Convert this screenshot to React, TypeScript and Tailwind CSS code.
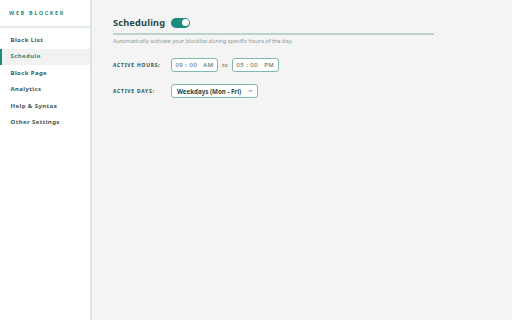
import React from 'react';

const navItems = ['Block List', 'Schedule', 'Block Page', 'Analytics', 'Help & Syntax', 'Other Settings'];

function TimeBox({ value, period }: { value: string; period: string }) {
  return (
    <div className="flex h-[14px] w-[47px] items-center justify-center gap-[6px] rounded-[3px] border border-[#7fb9b0] bg-white text-[6px] tracking-[0.5px] text-[#3a5a58]">
      <span>{value}</span>
      <span>{period}</span>
    </div>
  );
}

export default function App() {
  return (
    <div className="flex h-[320px] w-[512px] bg-[#f4f4f4] font-['Noto_Sans',sans-serif]">
      {/* sidebar */}
      <aside className="w-[92px] shrink-0 border-r-2 border-[#d9e7e4] bg-white">
        <div className="flex h-[28px] items-center border-b-2 border-[#e3ecea] pl-[9px] text-[5.5px] font-bold tracking-[1.6px] text-[#2a8a7c]">
          WEB BLOCKER
        </div>
        <nav className="pt-[4px]">
          {navItems.map(item => (
            <div
              key={item}
              className={
                item === 'Schedule'
                  ? 'flex h-[16.5px] items-center border-l-2 border-[#1a8c7b] bg-[#f2f2f2] pl-[8.5px] text-[6px] font-bold tracking-[0.4px] text-[#2a8a7c]'
                  : 'flex h-[16.5px] items-center pl-[10.5px] text-[6px] font-bold tracking-[0.4px] text-[#3d5554]'
              }
            >
              {item}
            </div>
          ))}
        </nav>
      </aside>

      {/* main */}
      <main className="flex-1 pl-[21px] pt-[16px]">
        <div className="w-[321px]">
          <div className="flex items-center gap-[6px] border-b-2 border-[#b9d3cf] pb-[3px]">
            <h1 className="text-[9.2px] font-bold tracking-[0.2px] text-[#1f4745]">Scheduling</h1>
            <div className="relative h-[10px] w-[19px] rounded-full bg-[#1a8c7b]">
              <div className="absolute right-[1.5px] top-[1.5px] h-[7px] w-[7px] rounded-full bg-white" />
            </div>
          </div>
        </div>
        <p className="mt-[2px] text-[5.6px] text-[#8a9a98]">
          Automatically activate your blocklist during specific hours of the day.
        </p>

        <div className="mt-[13px] flex items-center">
          <span className="w-[58px] text-[4.9px] font-bold tracking-[0.8px] text-[#24504d]">ACTIVE HOURS:</span>
          <TimeBox value="09 : 00" period="AM" />
          <span className="mx-[4px] text-[6px] text-[#5b6f6d]">to</span>
          <TimeBox value="05 : 00" period="PM" />
        </div>

        <div className="mt-[12px] flex items-center">
          <span className="w-[58px] text-[4.9px] font-bold tracking-[0.8px] text-[#24504d]">ACTIVE DAYS:</span>
          <div className="flex h-[14px] w-[87px] items-center justify-between rounded-[3px] border border-[#7fb9b0] bg-white pl-[5px] pr-[4px]">
            <span className="whitespace-nowrap text-[6.2px] font-bold text-[#1f4745]">Weekdays (Mon - Fri)</span>
            <svg width="5" height="4" viewBox="0 0 5 4" fill="none">
              <path d="M0.8 1L2.5 2.8L4.2 1" stroke="#4a6664" strokeWidth="0.8" />
            </svg>
          </div>
        </div>
      </main>
    </div>
  );
}
